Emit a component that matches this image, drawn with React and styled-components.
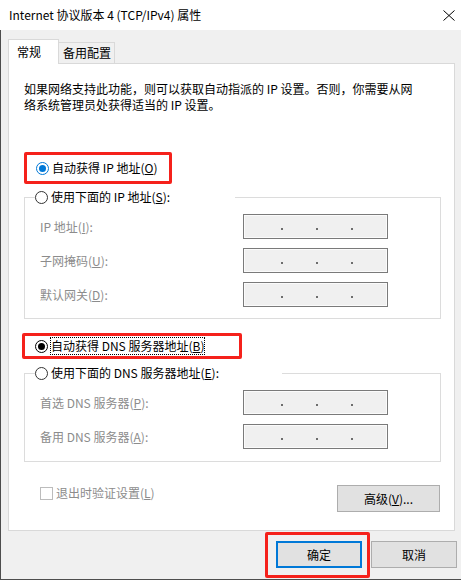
import React from "react";
import styled, { createGlobalStyle } from "styled-components";

const GlobalStyle = createGlobalStyle`
  html, body {
    margin: 0;
    padding: 0;
    background: #f0f0f0;
  }
  body {
    font-family: "Noto Sans CJK SC", "Noto Sans", sans-serif;
    font-size: 12px;
    color: #000;
  }
  * {
    box-sizing: border-box;
  }
`;

const Window = styled.div`
  width: 461px;
  height: 580px;
  display: flex;
  flex-direction: column;
  background: #f0f0f0;
  overflow: hidden;
`;

const TitleBar = styled.div`
  flex: none;
  height: 30px;
  display: flex;
  align-items: center;
  justify-content: space-between;
  padding: 0 6px 0 9px;
  background: #fff;
  line-height: 16px;
`;

const Body = styled.div`
  flex: 1;
  display: flex;
  flex-direction: column;
  padding: 9px 6px 0 7px;
  border-left: 1px solid #4d4d4d;
  border-bottom: 1px solid #4d4d4d;
`;

const Tabs = styled.div`
  display: flex;
  align-items: flex-end;
  height: 25px;
  margin-bottom: -1px;
  position: relative;
  z-index: 1;
`;

const Tab = styled.div`
  width: ${(p) => p.$width}px;
  height: ${(p) => (p.$active ? 25 : 22)}px;
  display: flex;
  align-items: center;
  padding: ${(p) => (p.$active ? "0 0 1px 8px" : "0 0 0 4px")};
  background: ${(p) => (p.$active ? "#fff" : "#f0f0f0")};
  border: 1px solid #d9d9d9;
  border-left: ${(p) => (p.$active ? "1px solid #d9d9d9" : "none")};
  border-bottom: ${(p) => (p.$active ? "none" : "1px solid #d9d9d9")};
  line-height: 16px;
`;

const Panel = styled.div`
  width: 447px;
  height: 468px;
  display: flex;
  flex-direction: column;
  padding: 17px 13px 0 15px;
  background: #fff;
  border: 1px solid #d9d9d9;
`;

const Description = styled.p`
  margin: 0;
  line-height: 16px;
`;

const Highlight = styled.div`
  display: flex;
  align-items: ${(p) => (p.$top ? "flex-start" : "center")};
  width: ${(p) => p.$width}px;
  height: ${(p) => p.$height}px;
  margin: ${(p) => p.$margin};
  padding: ${(p) => p.$padding};
  border: 3px solid #f5211b;
  border-radius: 2px;
`;

const Choice = styled.label`
  display: flex;
  align-items: center;
  gap: 3px;
  line-height: 16px;
  white-space: nowrap;
`;

const Radio = styled.span`
  flex: none;
  width: 13px;
  height: 13px;
  display: grid;
  place-items: center;
  border-radius: 50%;
  background: #fff;
  border: 1px solid ${(p) => (p.$checked ? p.$color : "#333")};

  &::after {
    content: "";
    width: 7px;
    height: 7px;
    border-radius: 50%;
    background: ${(p) => (p.$checked ? p.$color : "transparent")};
  }
`;

const Focus = styled.span`
  outline: 1px dotted #000;
  outline-offset: 0;
`;

const Group = styled.fieldset`
  width: 417px;
  margin: ${(p) => p.$top}px 0 0;
  padding: 0;
  min-inline-size: 0;
  border: 1px solid #dcdcdc;
`;

const Legend = styled.legend`
  width: ${(p) => p.$width}px;
  height: 16px;
  margin-left: 10px;
  padding: 0;
  display: flex;
  align-items: center;
`;

const Fields = styled.div`
  display: grid;
  grid-template-columns: 203px 145px;
  row-gap: 9px;
  align-items: center;
  padding: 9px 0 ${(p) => p.$bottom}px 15px;
`;

const FieldLabel = styled.span`
  color: #8c8c8c;
  line-height: 16px;
`;

const IpBox = styled.div`
  height: 25px;
  display: flex;
  justify-content: center;
  align-items: center;
  gap: 33px;
  padding: 5px 0 0 2px;
  background: #f0f0f0;
  border: 1px solid #7a7a7a;
  box-shadow: inset 0 0 0 1px #fbfbfb;
`;

const Dot = styled.i`
  width: 2px;
  height: 2px;
  background: #6d6d6d;
`;

const BottomRow = styled.div`
  display: flex;
  justify-content: space-between;
  align-items: flex-start;
  margin-top: 23px;
  padding: 0 1px 0 16px;
`;

const Check = styled.label`
  display: flex;
  align-items: center;
  gap: 3px;
  color: #8c8c8c;
  line-height: 16px;
`;

const CheckBox = styled.span`
  width: 13px;
  height: 13px;
  background: #fff;
  border: 1px solid #bcbcbc;
`;

const Button = styled.button`
  width: ${(p) => p.$width}px;
  height: 27px;
  margin: 0;
  padding: 0;
  font: inherit;
  color: #000;
  background: #e1e1e1;
  border: ${(p) => (p.$primary ? "2px solid #0078d7" : "1px solid #adadad")};
`;

const Footer = styled.div`
  display: flex;
  justify-content: flex-end;
  align-items: flex-start;
  padding-top: 1px;
  margin-right: -2px;
`;

const CancelButton = styled(Button)`
  margin: 9px 0 0 1px;
`;

const ipRows = (labels) =>
  labels.map(([text, key]) => (
    <React.Fragment key={text}>
      <FieldLabel>
        {text}(<u>{key}</u>):
      </FieldLabel>
      <IpBox>
        <Dot />
        <Dot />
        <Dot />
      </IpBox>
    </React.Fragment>
  ));

export default function App() {
  return (
    <Window>
      <GlobalStyle />
      <TitleBar>
        <span>Internet 协议版本 4 (TCP/IPv4) 属性</span>
        <svg width="12" height="11" viewBox="0 0 12 11">
          <path d="M0.5 0.5 L11.5 10.5 M11.5 0.5 L0.5 10.5" stroke="#000" strokeWidth="1" />
        </svg>
      </TitleBar>
      <Body>
        <Tabs>
          <Tab $active $width={51}>常规</Tab>
          <Tab $width={56}>备用配置</Tab>
        </Tabs>
        <Panel>
          <Description>
            如果网络支持此功能，则可以获取自动指派的 IP 设置。否则，你需要从网
            <br />
            络系统管理员处获得适当的 IP 设置。
          </Description>

          <Highlight $width={148} $height={32} $margin="39px 0 0" $padding="0 0 0 9px">
            <Choice>
              <Radio $checked $color="#0078d7" />
              <span>
                自动获得 IP 地址(<u>O</u>)
              </span>
            </Choice>
          </Highlight>

          <Group $top={5}>
            <Legend $width={200}>
              <Choice>
                <Radio />
                <span>
                  使用下面的 IP 地址(<u>S</u>):
                </span>
              </Choice>
            </Legend>
            <Fields $bottom={11}>
              {ipRows([
                ["IP 地址", "I"],
                ["子网掩码", "U"],
                ["默认网关", "D"],
              ])}
            </Fields>
          </Group>

          <Highlight $width={220} $height={26} $margin="14px 0 0 -2px" $padding="0 0 0 10px">
            <Choice>
              <Radio $checked $color="#000" />
              <Focus>
                自动获得 DNS 服务器地址(<u>B</u>)
              </Focus>
            </Choice>
          </Highlight>

          <Group $top={6}>
            <Legend $width={247}>
              <Choice>
                <Radio />
                <span>
                  使用下面的 DNS 服务器地址(<u>E</u>):
                </span>
              </Choice>
            </Legend>
            <Fields $bottom={12}>
              {ipRows([
                ["首选 DNS 服务器", "P"],
                ["备用 DNS 服务器", "A"],
              ])}
            </Fields>
          </Group>

          <BottomRow>
            <Check>
              <CheckBox />
              <span>
                退出时验证设置(<u>L</u>)
              </span>
            </Check>
            <Button $width={103}>
              高级(<u>V</u>)...
            </Button>
          </BottomRow>
        </Panel>
        <Footer>
          <Highlight $width={105} $height={46} $top $padding="6px 0 0 8px">
            <Button $primary $width={86}>
              确定
            </Button>
          </Highlight>
          <CancelButton $width={86}>取消</CancelButton>
        </Footer>
      </Body>
    </Window>
  );
}
